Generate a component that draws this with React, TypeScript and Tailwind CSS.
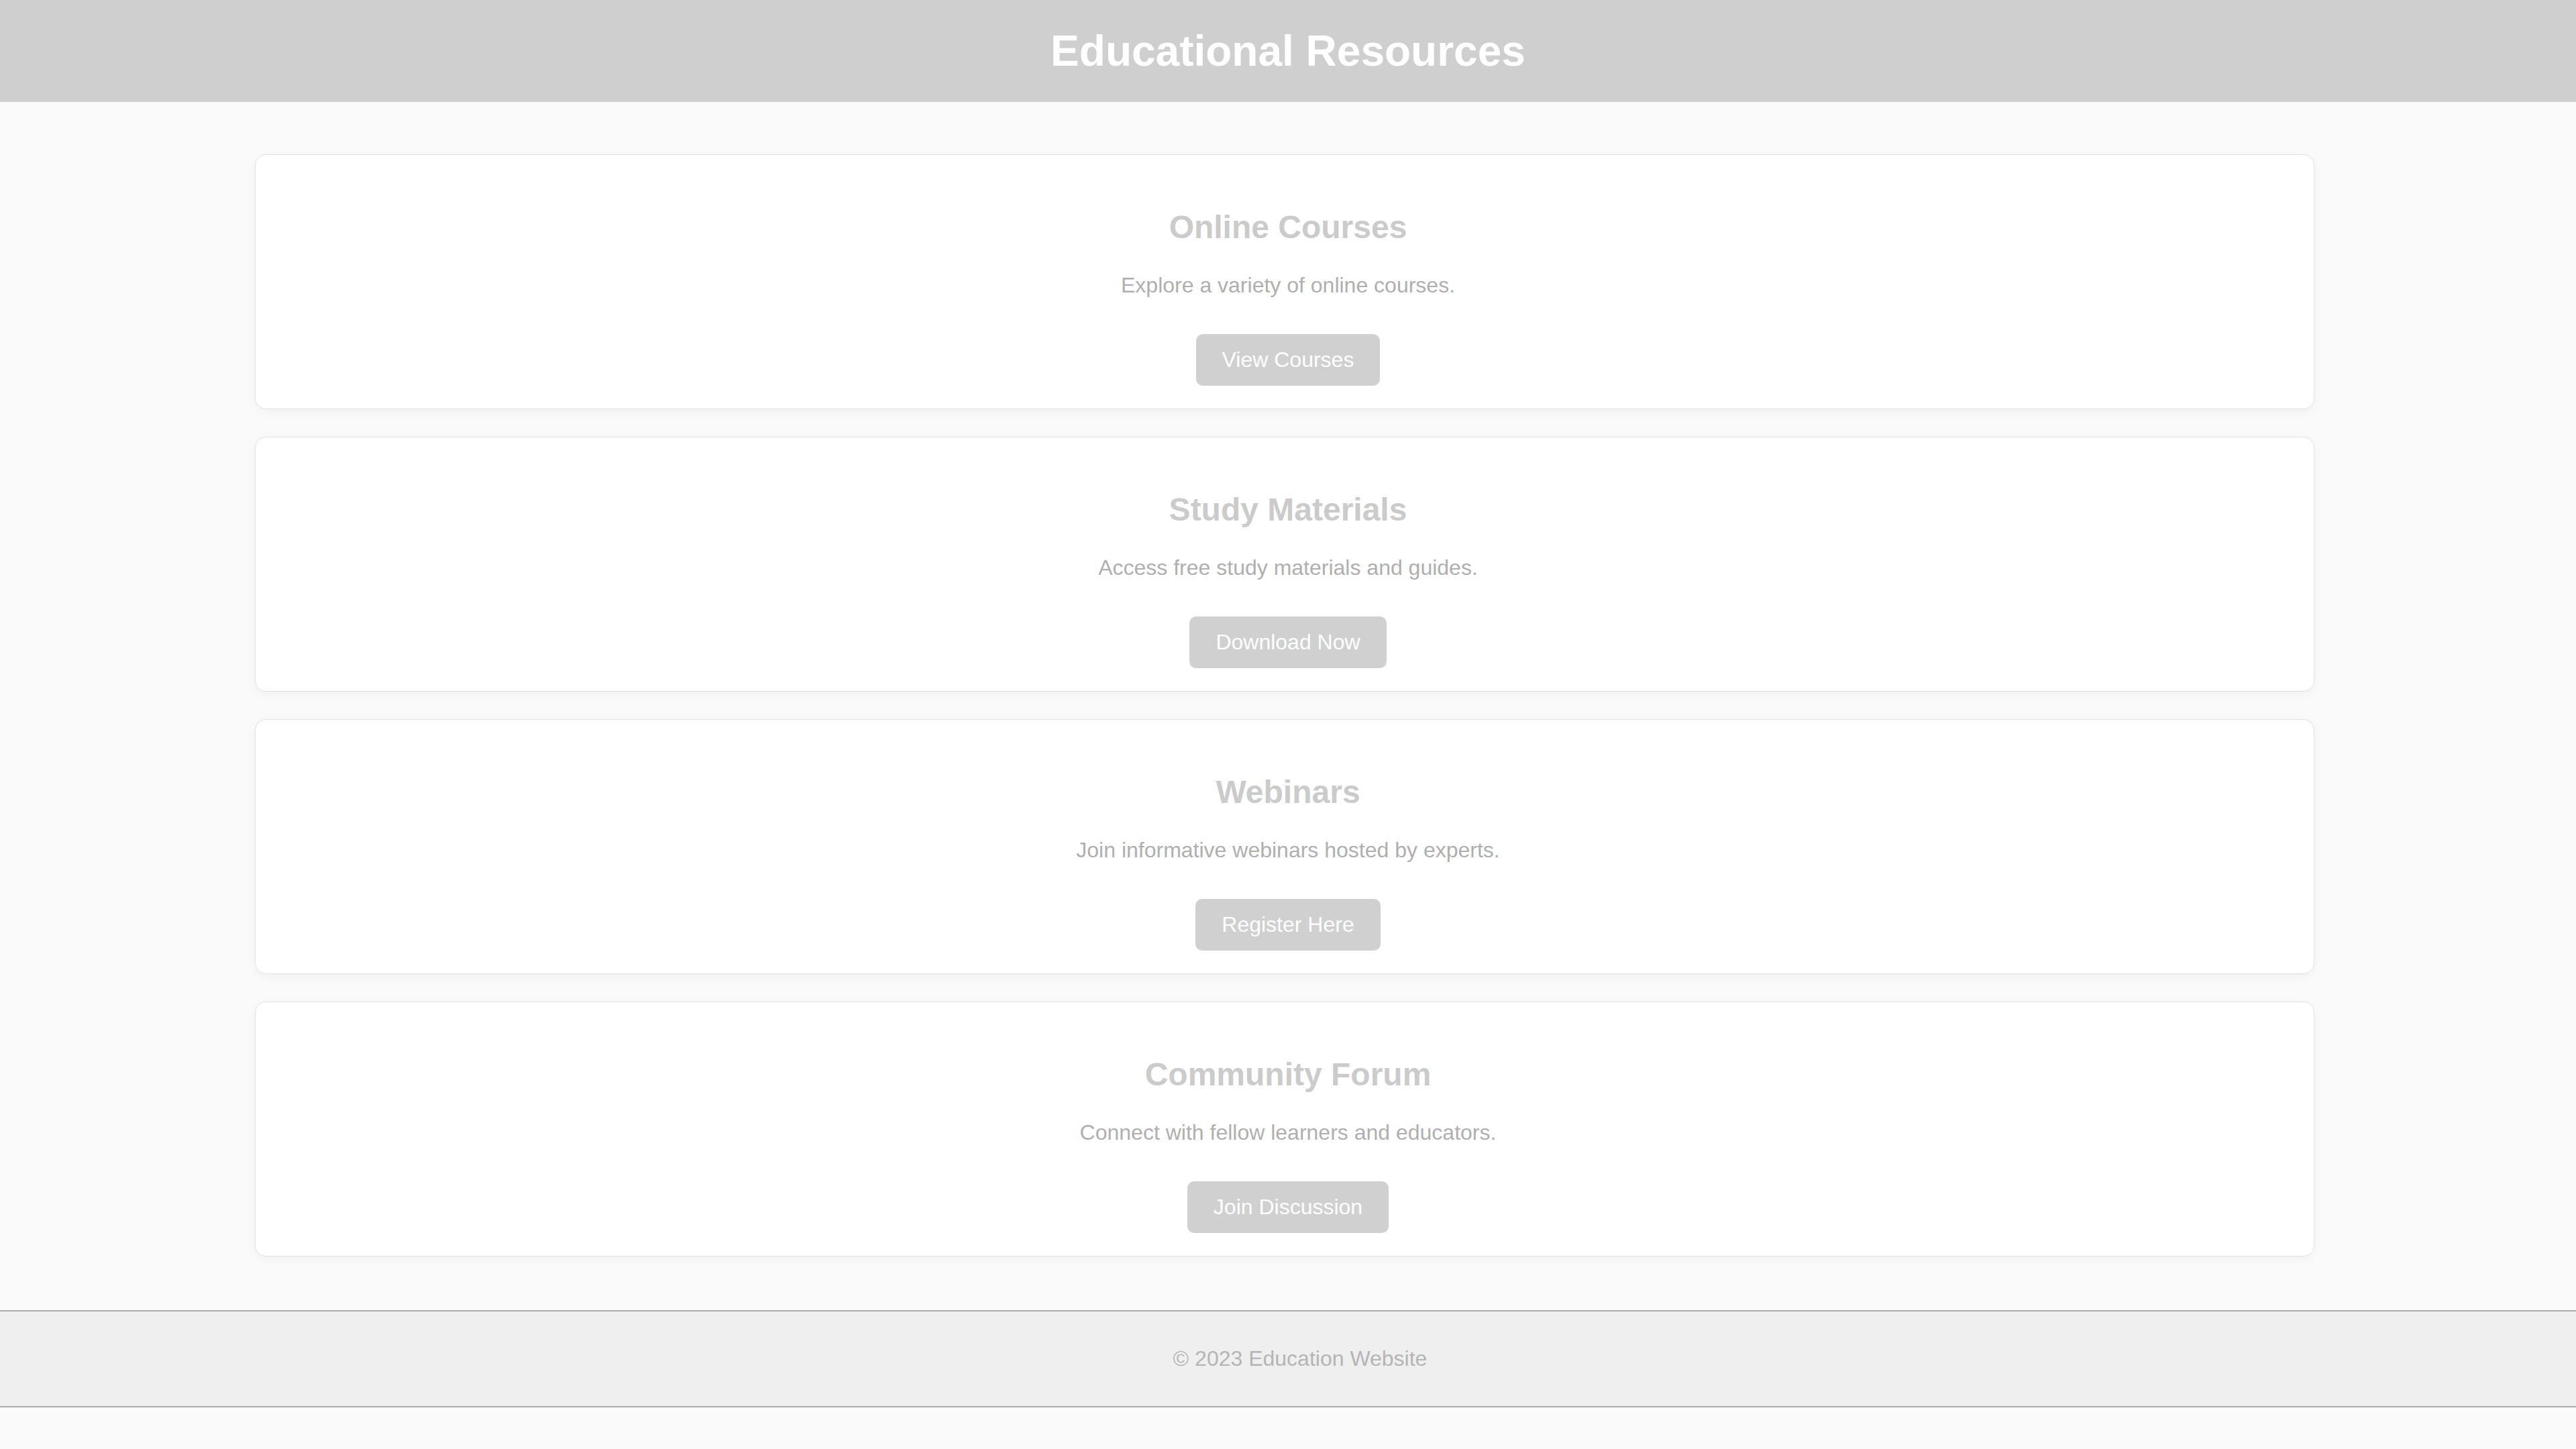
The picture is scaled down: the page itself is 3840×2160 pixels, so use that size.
// Educational resources landing page
const resources = [
  { title: 'Online Courses', text: 'Explore a variety of online courses.', action: 'View Courses' },
  { title: 'Study Materials', text: 'Access free study materials and guides.', action: 'Download Now' },
  { title: 'Webinars', text: 'Join informative webinars hosted by experts.', action: 'Register Here' },
  { title: 'Community Forum', text: 'Connect with fellow learners and educators.', action: 'Join Discussion' },
];

function ResourceCard({ title, text, action }: { title: string; text: string; action: string }) {
  return (
    <section className="flex flex-col items-center bg-white border border-[#e2e2e2] rounded-[16px] shadow-[0_4px_16px_rgba(0,0,0,0.04)] pt-[40px] pb-[34px] pl-[10px] text-center">
      <h2 className="mt-[40px] text-[48px] leading-[56px] font-bold text-[#cbcbcb]">{title}</h2>
      <p className="mt-[40px] text-[32px] leading-[37px] text-[#afafaf]">{text}</p>
      <button className="mt-[54px] h-[77px] px-[39px] rounded-[10px] bg-[#d0d0d0] text-white text-[32px] leading-[37px]">
        {action}
      </button>
    </section>
  );
}

export default function App() {
  return (
    <div className="min-h-screen flex flex-col bg-[#fafafa] font-['Liberation_Sans',Arial,sans-serif]">
      {/* Header */}
      <header className="h-[152px] flex items-center justify-center bg-[#cfcfcf]">
        <h1 className="text-[64px] leading-[74px] font-bold text-white">Educational Resources</h1>
      </header>

      {/* Resource cards */}
      <main className="flex flex-col gap-[41px] ml-[380px] mr-[390px] pt-[78px] pb-[80px]">
        {resources.map((r) => (
          <ResourceCard key={r.title} {...r} />
        ))}
      </main>

      {/* Footer */}
      <footer className="h-[145px] flex items-center justify-center pl-[36px] bg-[#efefef] border-t-2 border-b-2 border-[#ababab]">
        <p className="text-[32px] leading-[37px] text-[#b5b5b5]">© 2023 Education Website</p>
      </footer>
    </div>
  );
}
